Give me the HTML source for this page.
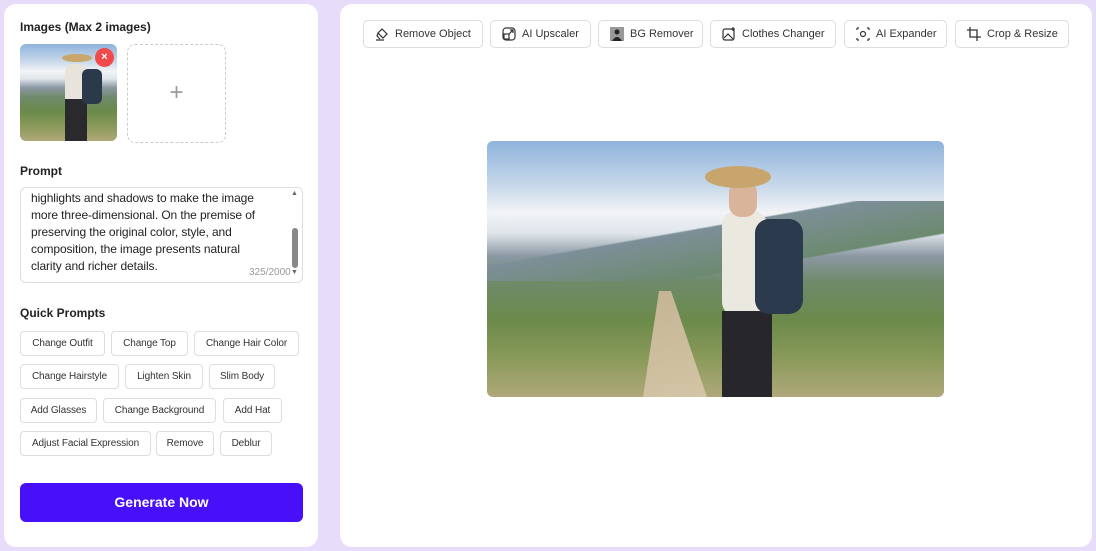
<!DOCTYPE html><html><head><style>
*{box-sizing:border-box;margin:0;padding:0}
body{width:1096px;height:551px;background:#e8dcfb;font-family:"Liberation Sans",sans-serif;position:relative;overflow:hidden;color:#222}
.p{position:absolute;background:#fff;border-radius:12px}
.h{position:absolute;font-size:12px;font-weight:bold;color:#222}
.chip{position:absolute;height:25px;border:1px solid #ddd;border-radius:4px;font-size:10px;color:#333;line-height:23px;text-align:center;background:#fff;letter-spacing:-0.1px}
.tb{position:absolute;top:20px;height:28px;border:1px solid #ddd;border-radius:5px;font-size:11px;color:#333;line-height:26px;padding-left:31px;background:#fff}
.tb svg{position:absolute;left:11px;top:6px}
.photo{background:linear-gradient(180deg,#8fb3dc 0%,#c9d9ea 18%,#f2f4f6 28%,#dfe5ea 36%,#8b98a3 45%,#6e8a6a 55%,#6b8a4a 70%,#8a9a5a 85%,#b0a87a 100%)}
</style></head><body>
<div class="p" style="left:4px;top:4px;width:314px;height:543px"></div>
<div class="p" style="left:340px;top:4px;width:752px;height:543px"></div>
<div class="h" style="left:20px;top:20px">Images (Max 2 images)</div>
<div class="photo" style="position:absolute;left:20px;top:44px;width:97px;height:97px;border-radius:6px;overflow:hidden">
<div style="position:absolute;left:45px;top:20px;width:22px;height:77px;background:#e8e4dc;border-radius:8px"></div>
<div style="position:absolute;left:45px;top:55px;width:22px;height:42px;background:#2a2a2e"></div>
<div style="position:absolute;left:62px;top:25px;width:20px;height:35px;background:#2b3a4a;border-radius:6px"></div>
<div style="position:absolute;left:42px;top:10px;width:30px;height:8px;background:#c9a66a;border-radius:50%"></div>
</div>
<div style="position:absolute;left:95px;top:48px;width:19px;height:19px;border-radius:50%;background:#f04a4a;color:#fff;font-size:11px;font-weight:bold;text-align:center;line-height:19px">×</div>
<div style="position:absolute;left:127px;top:44px;width:99px;height:99px;border:1.5px dashed #ccc;border-radius:8px;color:#999;font-size:24px;font-weight:200;text-align:center;line-height:96px">+</div>
<div class="h" style="left:20px;top:164px">Prompt</div>
<div style="position:absolute;left:20px;top:187px;width:283px;height:96px;border:1px solid #ddd;border-radius:6px;padding:2px 40px 0 10px;font-size:12px;line-height:17px;color:#222;letter-spacing:-0.1px">highlights and shadows to make the image more three-dimensional. On the premise of preserving the original color, style, and composition, the image presents natural clarity and richer details.</div>
<div style="position:absolute;left:292px;top:228px;width:6px;height:40px;background:#888;border-radius:3px"></div>
<div style="position:absolute;left:291px;top:190px;font-size:7px;color:#666">▲</div>
<div style="position:absolute;left:291px;top:269px;font-size:7px;color:#666">▼</div>
<div style="position:absolute;left:249px;top:267px;font-size:10px;color:#999">325/2000</div>
<div class="h" style="left:20px;top:306px">Quick Prompts</div>
<div class="chip" style="left:20px;top:331px;width:85px">Change Outfit</div>
<div class="chip" style="left:111px;top:331px;width:77px">Change Top</div>
<div class="chip" style="left:194px;top:331px;width:105px">Change Hair Color</div>
<div class="chip" style="left:20px;top:364px;width:99px">Change Hairstyle</div>
<div class="chip" style="left:125px;top:364px;width:78px">Lighten Skin</div>
<div class="chip" style="left:209px;top:364px;width:66px">Slim Body</div>
<div class="chip" style="left:20px;top:398px;width:77px">Add Glasses</div>
<div class="chip" style="left:103px;top:398px;width:113px">Change Background</div>
<div class="chip" style="left:223px;top:398px;width:59px">Add Hat</div>
<div class="chip" style="left:20px;top:431px;width:131px">Adjust Facial Expression</div>
<div class="chip" style="left:156px;top:431px;width:58px">Remove</div>
<div class="chip" style="left:220px;top:431px;width:52px">Deblur</div>
<div style="position:absolute;left:20px;top:483px;width:283px;height:39px;background:#4710f8;border-radius:6px;color:#fff;font-weight:bold;font-size:14px;text-align:center;line-height:39px">Generate Now</div>

<div class="tb" style="left:363px;width:120px"><svg width="14" height="14" viewBox="0 0 14 14" fill="none" stroke="#333" stroke-width="1.2"><path d="M3 6l4-4 5 5-4 4zM1 13h8M3 6l-1 3 3 3"/></svg>Remove Object</div>
<div class="tb" style="left:490px;width:101px"><svg width="14" height="14" viewBox="0 0 14 14" fill="none" stroke="#333" stroke-width="1.2"><rect x="1" y="1" width="12" height="12" rx="3"/><rect x="2" y="7" width="5" height="5"/><path d="M7 7l4-4M8 3h3v3"/></svg>AI Upscaler</div>
<div class="tb" style="left:598px;width:105px"><svg width="14" height="14" viewBox="0 0 14 14"><rect width="14" height="14" fill="#999"/><circle cx="7" cy="5" r="2.5" fill="#222"/><path d="M2 14q5-8 10 0" fill="#222"/></svg>BG Remover</div>
<div class="tb" style="left:710px;width:126px"><svg width="14" height="14" viewBox="0 0 14 14" fill="none" stroke="#333" stroke-width="1.2"><rect x="1" y="2" width="11" height="11" rx="2"/><path d="M2 11l4-4 5 5"/><path d="M11 0v4M9 2h4"/></svg>Clothes Changer</div>
<div class="tb" style="left:844px;width:103px"><svg width="14" height="14" viewBox="0 0 14 14" fill="none" stroke="#333" stroke-width="1.2"><circle cx="7" cy="7" r="2.5"/><path d="M1 1h2M1 1v2M13 1h-2M13 1v2M1 13h2M1 13v-2M13 13h-2M13 13v-2"/></svg>AI Expander</div>
<div class="tb" style="left:955px;width:114px"><svg width="14" height="14" viewBox="0 0 14 14" fill="none" stroke="#333" stroke-width="1.3"><path d="M3 0v10h11M0 3h10v11"/></svg>Crop &amp; Resize</div>

<div class="photo" style="position:absolute;left:487px;top:141px;width:457px;height:256px;border-radius:6px;overflow:hidden">
<div style="position:absolute;left:0;top:60px;width:457px;height:80px;background:linear-gradient(170deg,transparent 40%,#7d8f98 41%,#6c8a70 70%,transparent 71%)"></div>
<div style="position:absolute;left:235px;top:70px;width:45px;height:105px;background:#ebe8e0;border-radius:14px"></div>
<div style="position:absolute;left:235px;top:170px;width:50px;height:86px;background:#27272b"></div>
<div style="position:absolute;left:268px;top:78px;width:48px;height:95px;background:#2b3a4c;border-radius:14px"></div>
<div style="position:absolute;left:242px;top:40px;width:28px;height:36px;background:#d9b39a;border-radius:12px"></div>
<div style="position:absolute;left:218px;top:25px;width:66px;height:22px;background:#c7a56c;border-radius:50%"></div>
<div style="position:absolute;left:140px;top:150px;width:80px;height:106px;background:linear-gradient(170deg,#c4b495,#d2c4a4);clip-path:polygon(40% 0,55% 0,100% 100%,20% 100%)"></div>
</div>
</body></html>
